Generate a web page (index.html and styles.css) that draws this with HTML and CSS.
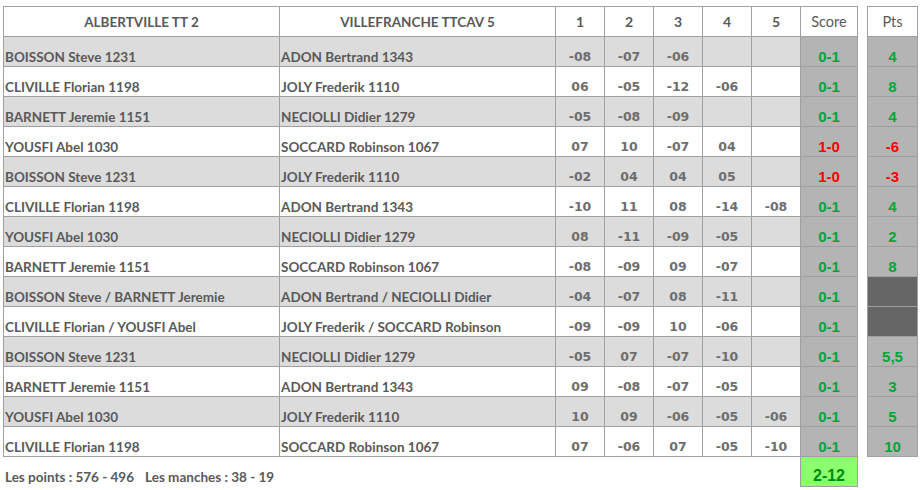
FILE: index.html
```html
<!DOCTYPE html>
<html lang="fr">
<head>
<meta charset="utf-8">
<title>Rencontre</title>
<link rel="stylesheet" href="styles.css">
</head>
<body>
<div class="page">
  <div class="match">
    <div class="row head">
      <div class="c first team">ALBERTVILLE TT 2</div>
      <div class="c team">VILLEFRANCHE TTCAV 5</div>
      <div class="c hnum">1</div>
      <div class="c hnum">2</div>
      <div class="c hnum">3</div>
      <div class="c hnum">4</div>
      <div class="c hnum">5</div>
      <div class="c hlabel">Score</div>
    </div>
    <div class="row odd">
      <div class="c first name">BOISSON Steve 1231</div><div class="c name">ADON Bertrand 1343</div>
      <div class="c set">-08</div><div class="c set">-07</div><div class="c set">-06</div><div class="c set"></div><div class="c set"></div>
      <div class="c score win">0-1</div>
    </div>
    <div class="row">
      <div class="c first name">CLIVILLE Florian 1198</div><div class="c name">JOLY Frederik 1110</div>
      <div class="c set">06</div><div class="c set">-05</div><div class="c set">-12</div><div class="c set">-06</div><div class="c set"></div>
      <div class="c score win">0-1</div>
    </div>
    <div class="row odd">
      <div class="c first name">BARNETT Jeremie 1151</div><div class="c name">NECIOLLI Didier 1279</div>
      <div class="c set">-05</div><div class="c set">-08</div><div class="c set">-09</div><div class="c set"></div><div class="c set"></div>
      <div class="c score win">0-1</div>
    </div>
    <div class="row">
      <div class="c first name">YOUSFI Abel 1030</div><div class="c name">SOCCARD Robinson 1067</div>
      <div class="c set">07</div><div class="c set">10</div><div class="c set">-07</div><div class="c set">04</div><div class="c set"></div>
      <div class="c score loss">1-0</div>
    </div>
    <div class="row odd">
      <div class="c first name">BOISSON Steve 1231</div><div class="c name">JOLY Frederik 1110</div>
      <div class="c set">-02</div><div class="c set">04</div><div class="c set">04</div><div class="c set">05</div><div class="c set"></div>
      <div class="c score loss">1-0</div>
    </div>
    <div class="row">
      <div class="c first name">CLIVILLE Florian 1198</div><div class="c name">ADON Bertrand 1343</div>
      <div class="c set">-10</div><div class="c set">11</div><div class="c set">08</div><div class="c set">-14</div><div class="c set">-08</div>
      <div class="c score win">0-1</div>
    </div>
    <div class="row odd">
      <div class="c first name">YOUSFI Abel 1030</div><div class="c name">NECIOLLI Didier 1279</div>
      <div class="c set">08</div><div class="c set">-11</div><div class="c set">-09</div><div class="c set">-05</div><div class="c set"></div>
      <div class="c score win">0-1</div>
    </div>
    <div class="row">
      <div class="c first name">BARNETT Jeremie 1151</div><div class="c name">SOCCARD Robinson 1067</div>
      <div class="c set">-08</div><div class="c set">-09</div><div class="c set">09</div><div class="c set">-07</div><div class="c set"></div>
      <div class="c score win">0-1</div>
    </div>
    <div class="row odd">
      <div class="c first name">BOISSON Steve / BARNETT Jeremie</div><div class="c name">ADON Bertrand / NECIOLLI Didier</div>
      <div class="c set">-04</div><div class="c set">-07</div><div class="c set">08</div><div class="c set">-11</div><div class="c set"></div>
      <div class="c score win">0-1</div>
    </div>
    <div class="row">
      <div class="c first name">CLIVILLE Florian / YOUSFI Abel</div><div class="c name">JOLY Frederik / SOCCARD Robinson</div>
      <div class="c set">-09</div><div class="c set">-09</div><div class="c set">10</div><div class="c set">-06</div><div class="c set"></div>
      <div class="c score win">0-1</div>
    </div>
    <div class="row odd">
      <div class="c first name">BOISSON Steve 1231</div><div class="c name">NECIOLLI Didier 1279</div>
      <div class="c set">-05</div><div class="c set">07</div><div class="c set">-07</div><div class="c set">-10</div><div class="c set"></div>
      <div class="c score win">0-1</div>
    </div>
    <div class="row">
      <div class="c first name">BARNETT Jeremie 1151</div><div class="c name">ADON Bertrand 1343</div>
      <div class="c set">09</div><div class="c set">-08</div><div class="c set">-07</div><div class="c set">-05</div><div class="c set"></div>
      <div class="c score win">0-1</div>
    </div>
    <div class="row odd">
      <div class="c first name">YOUSFI Abel 1030</div><div class="c name">JOLY Frederik 1110</div>
      <div class="c set">10</div><div class="c set">09</div><div class="c set">-06</div><div class="c set">-05</div><div class="c set">-06</div>
      <div class="c score win">0-1</div>
    </div>
    <div class="row">
      <div class="c first name">CLIVILLE Florian 1198</div><div class="c name">SOCCARD Robinson 1067</div>
      <div class="c set">07</div><div class="c set">-06</div><div class="c set">07</div><div class="c set">-05</div><div class="c set">-10</div>
      <div class="c score win">0-1</div>
    </div>
    <div class="foot-text">Les points : 576 - 496<span class="sep"></span>Les manches : 38 - 19</div>
    <div class="total">2-12</div>
  </div>

  <div class="pts">
    <div class="p hlabel top">Pts</div>
    <div class="p pval win">4</div>
    <div class="p pval win">8</div>
    <div class="p pval win">4</div>
    <div class="p pval loss">-6</div>
    <div class="p pval loss">-3</div>
    <div class="p pval win">4</div>
    <div class="p pval win">2</div>
    <div class="p pval win">8</div>
    <div class="p pval dark"></div>
    <div class="p pval dark"></div>
    <div class="p pval win">5,5</div>
    <div class="p pval win">3</div>
    <div class="p pval win">5</div>
    <div class="p pval win">10</div>
  </div>
</div>
</body>
</html>
```

FILE: styles.css
```css
html, body {
  margin: 0;
  background: #ffffff;
}

body {
  font-family: Lato, "Liberation Sans", sans-serif;
  color: #595959;
}

.page {
  display: flex;
  align-items: flex-start;
  gap: 9px;
  padding: 6px 0 0 3px;
}

.match {
  display: grid;
  grid-template-columns: 277px 276px repeat(5, 49px) 57px;
  grid-template-rows: 31px;
  grid-auto-rows: 30px;
}

.row {
  display: contents;
}

.c {
  box-sizing: border-box;
  border-right: 1px solid #a0a0a0;
  border-bottom: 1px solid #a0a0a0;
  display: flex;
  align-items: flex-end;
  justify-content: center;
  padding-bottom: 1px;
  line-height: 16px;
  white-space: nowrap;
  overflow: hidden;
}

.c.first {
  border-left: 1px solid #a0a0a0;
}

.head .c {
  border-top: 1px solid #a0a0a0;
  align-items: center;
  padding-bottom: 0;
  background: #ffffff;
}

.team {
  font-weight: 700;
  font-size: 13.5px;
}

.hnum {
  font-weight: 700;
  font-size: 14px;
}

.hlabel {
  font-weight: 400;
  font-size: 14.5px;
}

.odd .c {
  background: #dcdcdc;
}

.name {
  justify-content: flex-start;
  padding-left: 1px;
  font-weight: 700;
  font-size: 13.5px;
}

.set {
  font-family: "DejaVu Sans", Verdana, sans-serif;
  font-weight: 700;
  font-size: 12.5px;
  color: #6e6e6e;
}

.c.score,
.odd .c.score {
  background: #b4b4b4;
  font-family: "Liberation Sans", Arial, sans-serif;
  font-weight: 700;
  font-size: 15px;
}

.win {
  color: #00a53a;
}

.loss {
  color: #ff0000;
}

.foot-text {
  grid-column: 1 / 8;
  display: flex;
  align-items: flex-end;
  padding: 0 0 2px 2px;
  font-weight: 700;
  font-size: 13.5px;
  line-height: 16px;
}

.sep {
  display: inline-block;
  width: 11px;
}

.total {
  box-sizing: border-box;
  border-right: 1px solid #a0a0a0;
  border-bottom: 1px solid #a0a0a0;
  box-shadow: -1px 0 0 0 #a0a0a0;
  background: #8cff6c;
  color: #008a12;
  display: flex;
  align-items: flex-end;
  justify-content: center;
  padding-bottom: 1px;
  font-family: "Liberation Sans", Arial, sans-serif;
  font-weight: 700;
  font-size: 16px;
  line-height: 18px;
}

.pts {
  display: grid;
  grid-template-columns: 51px;
  grid-template-rows: 31px;
  grid-auto-rows: 30px;
}

.p {
  box-sizing: border-box;
  border-left: 1px solid #a0a0a0;
  border-right: 1px solid #a0a0a0;
  border-bottom: 1px solid #a0a0a0;
  display: flex;
  align-items: flex-end;
  justify-content: center;
  padding-bottom: 1px;
  line-height: 16px;
}

.p.top {
  border-top: 1px solid #a0a0a0;
  align-items: center;
  padding-bottom: 0;
  background: #ffffff;
}

.pval {
  background: #b4b4b4;
  font-family: "Liberation Sans", Arial, sans-serif;
  font-weight: 700;
  font-size: 15px;
}

.pval.dark {
  background: #666666;
}
```
